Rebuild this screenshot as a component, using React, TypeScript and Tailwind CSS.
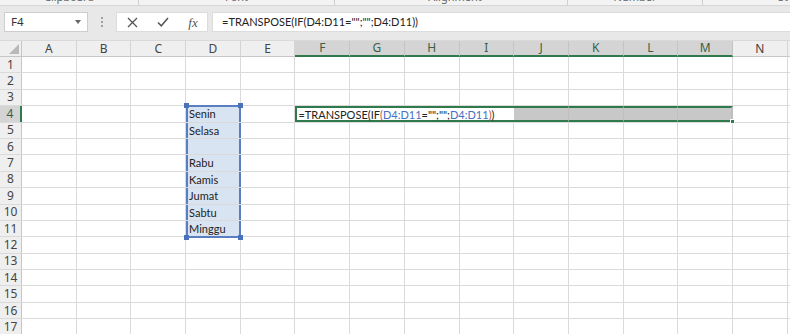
import * as React from 'react';

const COLS = ['A', 'B', 'C', 'D', 'E', 'F', 'G', 'H', 'I', 'J', 'K', 'L', 'M', 'N'];
const ROWS = Array.from({ length: 17 }, (_, i) => i + 1);
const DAYS: Record<number, string> = { 4: 'Senin', 5: 'Selasa', 7: 'Rabu', 8: 'Kamis', 9: 'Jumat', 10: 'Sabtu', 11: 'Minggu' };
const SEL_COLS = ['F', 'G', 'H', 'I', 'J', 'K', 'L', 'M'];

function Formula() {
  return (
    <span className="whitespace-nowrap text-[#222]">
      =TRANSPOSE(IF<span className="text-[#c0504d]">(</span>
      <span className="text-[#4472c4]">D4:D11</span>="";"";
      <span className="text-[#4472c4]">D4:D11</span>
      <span className="text-[#c0504d]">)</span>)
    </span>
  );
}

function Handle({ pos }: { pos: string }) {
  return <span className={`absolute w-[5px] h-[5px] bg-[#4a72b8] z-20 ${pos}`} />;
}

function Cell({ row, col }: { row: number; col: string }) {
  const inD = col === 'D' && row >= 4 && row <= 11;
  const inF = row === 4 && SEL_COLS.includes(col);
  let cls = 'relative w-[54.7px] h-full shrink-0 border-r border-[#dadada]';
  let content: React.ReactNode = null;

  if (inD) {
    cls = 'relative w-[54.7px] h-full shrink-0 bg-[#d9e4f3] border-x-2 border-[#5a7fc0] px-[1px]';
    content = (
      <>
        <span className="leading-[16px]">{DAYS[row] ?? ''}</span>
        {row === 4 && (
          <>
            <span className="absolute left-[-4px] right-[-4px] top-[-1px] h-[2px] bg-[#5a7fc0]" />
            <Handle pos="left-[-4px] top-[-3px]" />
            <Handle pos="right-[-4px] top-[-3px]" />
          </>
        )}
        {row === 11 && (
          <>
            <span className="absolute left-[-2px] right-[-2px] bottom-[-2px] h-[2px] bg-[#5a7fc0]" />
            <Handle pos="left-[-4px] bottom-[-4px]" />
            <Handle pos="right-[-4px] bottom-[-4px]" />
          </>
        )}
      </>
    );
  } else if (inF) {
    const first = col === 'F';
    const last = col === 'M';
    const white = ['F', 'G', 'H', 'I'].includes(col);
    cls = `relative w-[54.7px] h-full shrink-0 border-y-2 border-[#2e7a4d] ${white ? 'bg-white' : 'bg-[#c8c8c8] border-r border-r-[#bfbfbf]'} ${first ? 'border-l-2 border-l-[#2e7a4d] z-10' : ''} ${last ? 'border-r-2 border-r-[#2e7a4d]' : ''}`;
    if (first) {
      content = (
        <span className="absolute left-[1px] top-[-1px] leading-[16px] z-10">
          <Formula />
        </span>
      );
    }
    if (last) {
      content = <span className="absolute right-[-4px] bottom-[-4px] w-[5px] h-[5px] bg-[#2e7a4d] border border-white z-20" />;
    }
  }

  return <div className={cls}>{content}</div>;
}

export default function App() {
  return (
    <div className="w-[790px] h-[334px] overflow-hidden bg-white flex flex-col" style={{ fontFamily: 'Lato, "Open Sans", sans-serif' }}>
      {/* ribbon group labels, cut off at the top */}
      <div className="h-[6px] shrink-0 bg-[#f3f3f3] border-b border-[#d6d6d6] flex items-end overflow-hidden text-[11px] text-[#666] font-['Noto_Sans',sans-serif]">
        <div className="w-[139px] h-[6px] flex justify-center border-r border-[#cfcfcf]"><span className="leading-[12px] -mt-[8px]">Clipboard</span></div>
        <div className="w-[196px] h-[6px] flex justify-center border-r border-[#cfcfcf]"><span className="leading-[12px] -mt-[8px]">Font</span></div>
        <div className="w-[233px] h-[6px] flex justify-center border-r border-[#cfcfcf]"><span className="leading-[12px] -mt-[8px] pl-[8px]">Alignment</span></div>
        <div className="w-[135px] h-[6px] flex justify-center border-r border-[#cfcfcf]"><span className="leading-[12px] -mt-[8px]">Number</span></div>
        <div className="flex-1 h-[6px] flex justify-end pr-[2px]"><span className="leading-[12px] -mt-[8px]">St</span></div>
      </div>

      {/* formula bar */}
      <div className="h-[34px] shrink-0 bg-[#e8e8e8] flex items-start pt-[6px] pl-[4px] gap-0">
        <div className="w-[84px] h-[20px] bg-white border border-[#cdcdcd] flex items-center justify-between pl-[6px] pr-[6px] text-[11.5px] text-[#333] font-['Noto_Sans',sans-serif]">
          <span>F4</span>
          <svg width="6" height="4" viewBox="0 0 6 4"><path d="M0 0h6L3 4z" fill="#666" /></svg>
        </div>
        <div className="w-[28px] h-[20px] flex flex-col items-center justify-center gap-[2px]">
          <span className="w-[2px] h-[2px] bg-[#a0a0a0]" />
          <span className="w-[2px] h-[2px] bg-[#a0a0a0]" />
          <span className="w-[2px] h-[2px] bg-[#a0a0a0]" />
        </div>
        <div className="w-[92px] h-[20px] bg-white border border-[#dcdcdc] flex items-center">
          <div className="w-[30px] flex justify-center">
            <svg width="11" height="11" viewBox="0 0 11 11"><path d="M1 1l9 9M10 1l-9 9" stroke="#555" strokeWidth="1.3" /></svg>
          </div>
          <div className="w-[32px] flex justify-center">
            <svg width="12" height="10" viewBox="0 0 12 10"><path d="M1 5.5l3.3 3.3L11 1" stroke="#555" strokeWidth="1.5" fill="none" /></svg>
          </div>
          <div className="w-[28px] flex justify-center text-[13px] italic text-[#555] font-['Liberation_Serif',serif] leading-none">fx</div>
        </div>
        <div className="ml-[4px] flex-1 h-[20px] bg-white border-y border-l border-[#dcdcdc] flex items-center pl-[9px] text-[11px]">
          <span className="whitespace-nowrap text-[#222]">=TRANSPOSE(IF(D4:D11="";"";D4:D11))</span>
        </div>
      </div>

      {/* column headers */}
      <div className="h-[17px] shrink-0 flex bg-[#efefef] border-t border-[#d9d9d9] text-[12px] text-[#444] font-['Noto_Sans',sans-serif]">
        <div className="w-[22px] h-full shrink-0 border-r border-b border-[#c6c6c6] relative">
          <svg className="absolute right-[2px] bottom-[2px]" width="10" height="10" viewBox="0 0 10 10"><path d="M10 0v10H0z" fill="#b9b9b9" /></svg>
        </div>
        {COLS.map((c) => {
          const sel = SEL_COLS.includes(c);
          return (
            <div
              key={c}
              className={`w-[54.7px] h-full shrink-0 flex items-center justify-center border-r leading-none ${sel ? 'bg-[#d4d4d4] border-r-[#c4c4c4] border-b-2 border-b-[#2e7a4d] text-[#3b5e48]' : 'border-r-[#d4d4d4] border-b border-b-[#c6c6c6]'}`}
            >
              {c}
            </div>
          );
        })}
        <div className="flex-1 border-b border-[#c6c6c6]" />
      </div>

      {/* grid */}
      <div className="flex flex-col text-[11px] text-[#222]">
        {ROWS.map((r) => (
          <div key={r} className="h-[16.4px] shrink-0 flex border-b border-[#dadada]">
            <div
              className={`w-[22px] h-full shrink-0 flex items-center justify-center text-[12px] leading-none font-['Noto_Sans',sans-serif] ${r === 4 ? 'bg-[#d4d4d4] border-r-2 border-[#2e7a4d] text-[#3b5e48]' : 'bg-[#efefef] border-r border-[#c6c6c6] text-[#444]'}`}
            >
              {r}
            </div>
            {COLS.map((c) => (
              <Cell key={c} row={r} col={c} />
            ))}
            <div className="flex-1" />
          </div>
        ))}
      </div>
    </div>
  );
}
